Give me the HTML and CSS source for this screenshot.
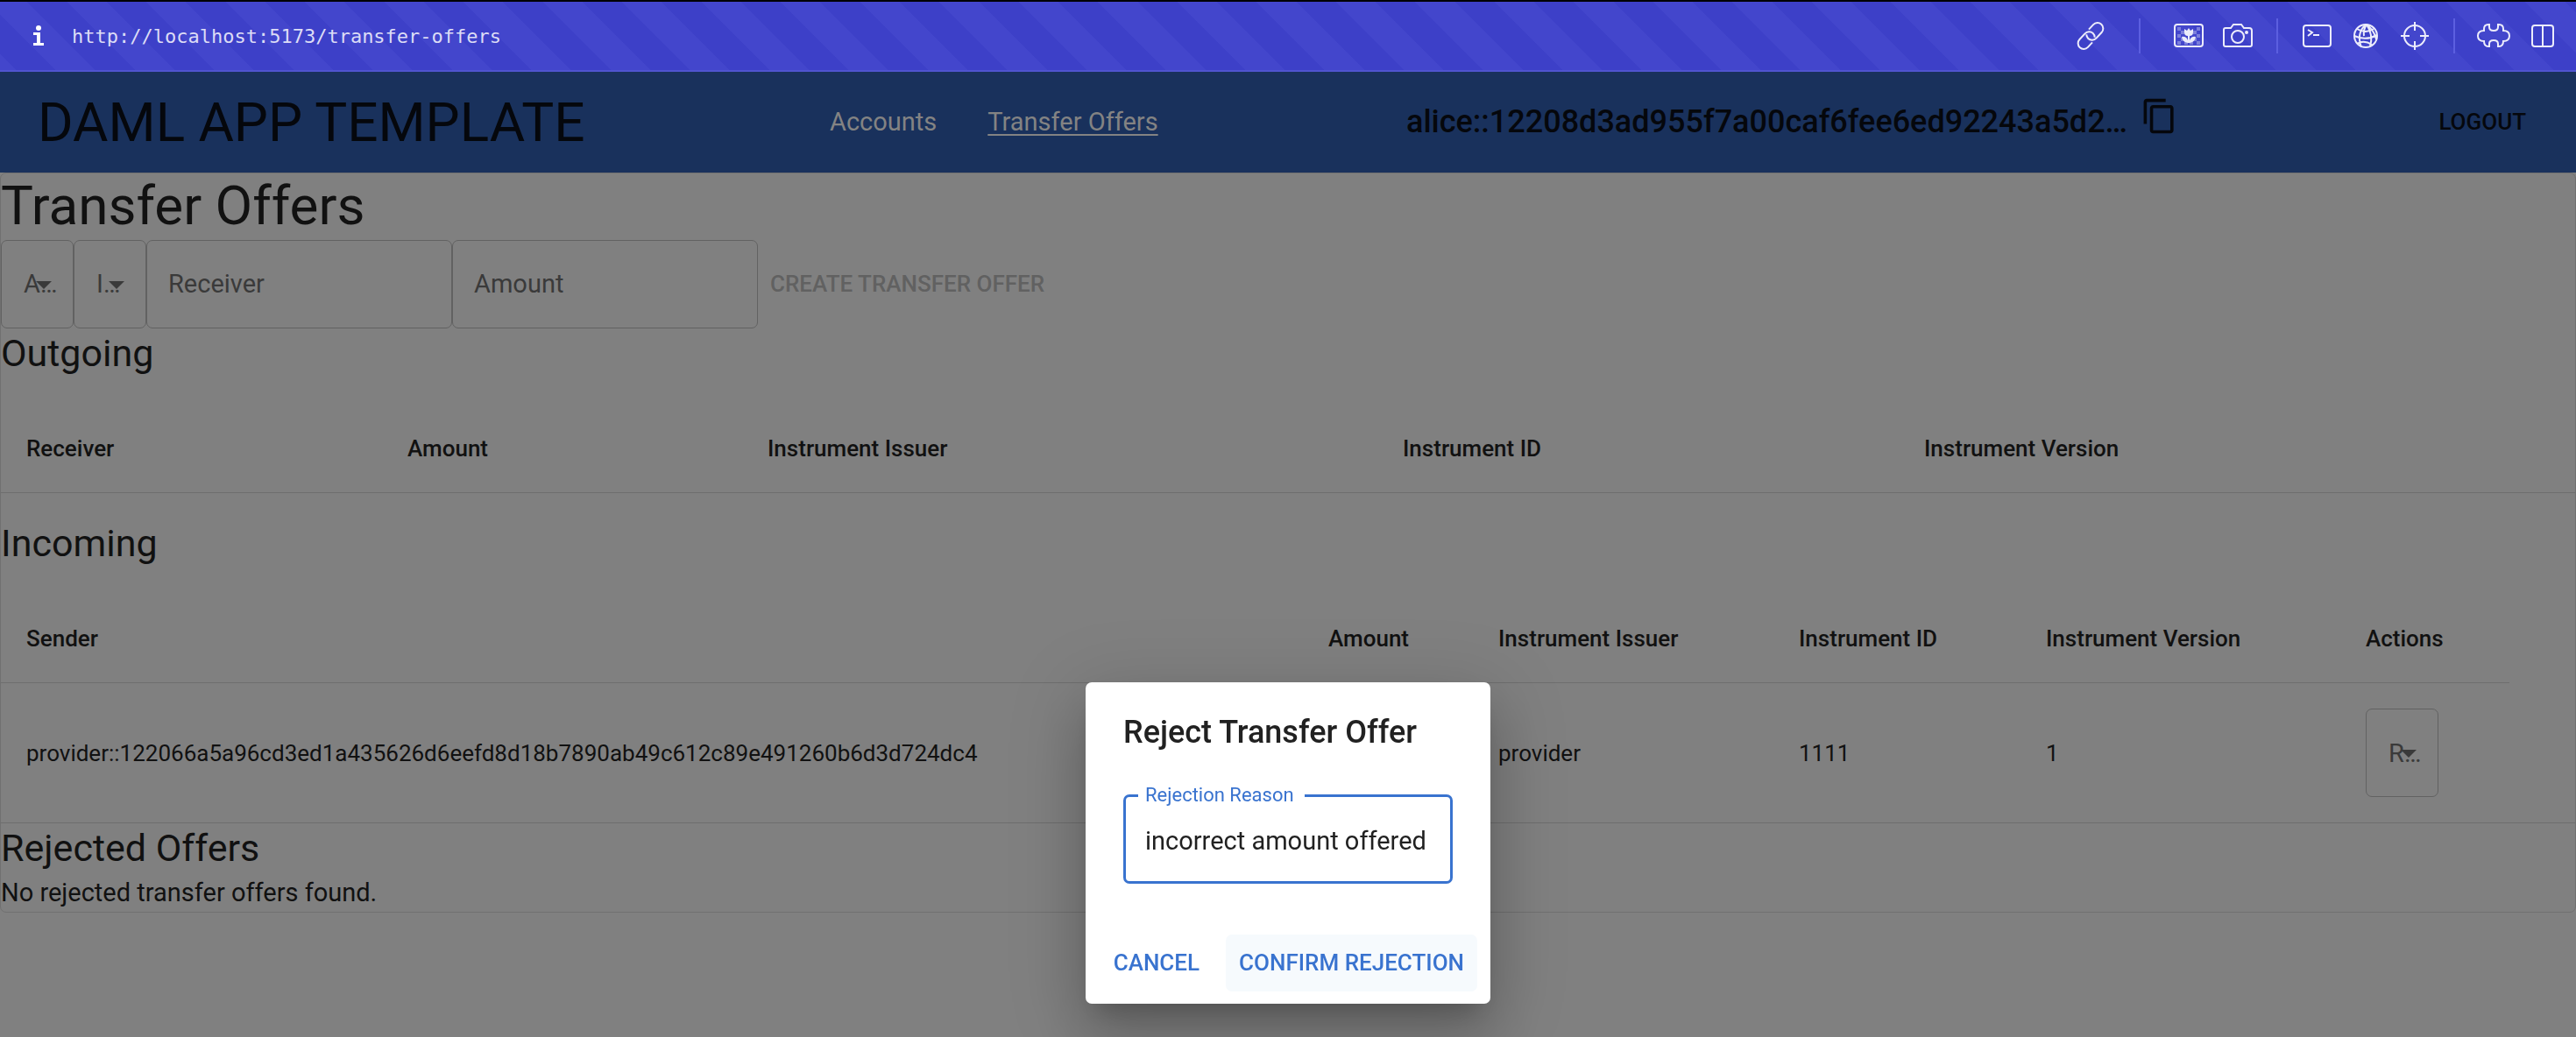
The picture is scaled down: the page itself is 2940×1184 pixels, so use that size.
FILE: index.html
```html
<!DOCTYPE html>
<html lang="en">
<head>
<meta charset="utf-8">
<title>Daml App Template</title>
<link rel="stylesheet" href="styles.css">
</head>
<body>
<div class="devbar">
  <span class="info">
    <svg width="14" height="24" viewBox="0 0 14 24" fill="#fff"><circle cx="7" cy="3" r="3"/><path d="M1 8h8v12h4v3H1v-3h4v-9H1z"/></svg>
  </span>
  <span class="url">http://localhost:5173/transfer-offers</span>
  <div class="tools">
    <button class="tool" aria-label="Copy link">
      <svg width="36" height="34" viewBox="-18 -17 36 34"><g transform="rotate(-47)"><path d="M-4 6.500H-11.500a6.500 6.500 0 0 1 0-13H-2.500a6.500 6.500 0 0 1 6.500 6.500a6.500 6.500 0 0 1-2 4.600"/><path d="M4-6.500H11.500a6.500 6.500 0 0 1 0 13H2.500a6.500 6.500 0 0 1-6.500-6.500a6.500 6.500 0 0 1 2-4.600"/></g></svg>
    </button>
    <span class="divider divider-wide"></span>
    <button class="tool" aria-label="Image">
      <svg width="36" height="34" viewBox="0 0 36 34"><path class="checks" d="M5 7h4v4H5zM9 11h4v4H9zM5 15h4v4H5zM9 19h4v4H9zM5 23h4v4H5zM13 23h4v4h-4zM27 7h4v4h-4zM23 11h4v4h-4zM27 15h4v4h-4zM23 19h4v4h-4zM27 23h4v4h-4zM19 23h4v4h-4z"/><rect x="2" y="4" width="32" height="25" rx="3"/><path class="solid" d="M13 9l3 2 2-3 2 3 3-2v4q0 4-4 4v5q2-5 7-4-1 6-7 7h-2q-6-1-7-7 5-1 7 4v-5q-4 0-4-4z"/></svg>
    </button>
    <button class="tool" aria-label="Screenshot">
      <svg width="36" height="34" viewBox="0 0 36 34"><path d="M4 8h6l3-4h9l3 4h6q3 0 3 3v16q0 2-2 2H4q-2 0-2-2V10q0-2 2-2z"/><circle cx="18" cy="18" r="7"/><circle class="solid" cx="28" cy="13" r="2"/></svg>
    </button>
    <span class="divider"></span>
    <button class="tool" aria-label="Console">
      <svg width="36" height="34" viewBox="0 0 36 34"><rect x="3" y="5" width="31" height="24" rx="3"/><path d="M8 10l5 3-5 4M14 16h7"/></svg>
    </button>
    <button class="tool" aria-label="Network">
      <svg width="34" height="34" viewBox="0 0 34 34"><circle cx="17" cy="17" r="13"/><path d="M17 4Q6 14 12 30M18 4Q26 16 22 29M18 4Q14 10 15 17M7 9q10 6 19 0M4 17q13 6 26-1M7 26q8-5 17 1M18 4q9 7 11 17"/></svg>
    </button>
    <button class="tool" aria-label="Inspect">
      <svg width="34" height="34" viewBox="0 0 34 34"><circle cx="17" cy="17" r="12"/><path d="M17 1v10M17 23v10M1 17h10M23 17h10"/></svg>
    </button>
    <span class="divider"></span>
    <button class="tool" aria-label="Extensions">
      <svg width="40" height="34" viewBox="0 0 40 34"><path d="M9 11V9q0-5 5-5h1v3q0 4 5 4t5-4V4h1q5 0 5 5v2q7 0 7 6t-7 6q0 6-5 6h-1v-3q0-4-5-4t-5 4v3h-1q-5 0-5-6-7 0-7-6t7-6z"/></svg>
    </button>
    <button class="tool" aria-label="Split view">
      <svg width="28" height="34" viewBox="0 0 28 34"><rect x="2" y="5" width="24" height="24" rx="3"/><path d="M14 5v24"/></svg>
    </button>
  </div>
</div>

<div class="app">
  <header class="appbar">
    <div class="brand">DAML APP TEMPLATE</div>
    <nav class="nav">
      <a href="#accounts">Accounts</a>
      <a href="#transfer-offers" class="current">Transfer Offers</a>
    </nav>
    <div class="party">
      <span>alice::12208d3ad955f7a00caf6fee6ed92243a5d2…</span>
      <button class="copy" aria-label="Copy party ID">
        <svg width="43" height="43" viewBox="0 0 24 24"><path d="M16 1H4c-1.100 0-2 .9-2 2v14h2V3h12V1zm3 4H8c-1.100 0-2 .9-2 2v14c0 1.100.9 2 2 2h11c1.100 0 2-.9 2-2V7c0-1.100-.9-2-2-2zm0 16H8V7h11v14z"/></svg>
      </button>
    </div>
    <button class="logout">LOGOUT</button>
  </header>

  <main class="paper">
    <h1>Transfer Offers</h1>
    <form class="offer-form">
      <div class="select"><select aria-label="Account"><option>Account</option></select><i class="arrow"></i></div>
      <div class="select"><select aria-label="Instrument"><option>Instrument</option></select><i class="arrow"></i></div>
      <input class="field" type="text" aria-label="Receiver" placeholder="Receiver">
      <input class="field" type="text" aria-label="Amount" placeholder="Amount">
      <button type="button" class="create" disabled>CREATE TRANSFER OFFER</button>
    </form>

    <h2>Outgoing</h2>
    <table class="outgoing">
      <colgroup><col class="o1"><col class="o2"><col class="o3"><col class="o4"><col></colgroup>
      <thead>
        <tr><th>Receiver</th><th>Amount</th><th>Instrument Issuer</th><th>Instrument ID</th><th>Instrument Version</th></tr>
      </thead>
    </table>

    <h2>Incoming</h2>
    <table class="incoming">
      <colgroup><col class="i1"><col class="i2"><col class="i3"><col class="i4"><col class="i5"><col class="i6"><col></colgroup>
      <thead>
        <tr><th>Sender</th><th>Amount</th><th>Instrument Issuer</th><th>Instrument ID</th><th>Instrument Version</th><th>Actions</th><td class="blank"></td></tr>
      </thead>
      <tbody>
        <tr>
          <td>provider::122066a5a96cd3ed1a435626d6eefd8d18b7890ab49c612c89e491260b6d3d724dc4</td>
          <td></td><td>provider</td><td>1111</td><td>1</td>
          <td><div class="select"><select aria-label="Respond"><option>Respond</option></select><i class="arrow"></i></div></td>
          <td></td>
        </tr>
      </tbody>
    </table>

    <h2>Rejected Offers</h2>
    <p>No rejected transfer offers found.</p>
  </main>
</div>

<div class="backdrop">
  <div class="dialog" role="dialog" aria-labelledby="dialog-title">
    <h2 class="dialog-title" id="dialog-title">Reject Transfer Offer</h2>
    <fieldset class="reason">
      <legend><label for="reason">Rejection Reason</label></legend>
      <input id="reason" type="text" value="incorrect amount offered">
    </fieldset>
    <div class="actions">
      <button class="action">CANCEL</button>
      <button class="action hover">CONFIRM REJECTION</button>
    </div>
  </div>
</div>
</body>
</html>
```
FILE: styles.css
```css
* { box-sizing: border-box; }
body {
  margin: 0;
  min-height: 100vh;
  display: flex;
  flex-direction: column;
  background: #808080;
  color: #111;
  font-family: Roboto, "Liberation Sans", sans-serif;
  font-size: 29px;
  line-height: 43px;
}
button, input, select { font: inherit; color: inherit; margin: 0; border: 0; background: none; padding: 0; }
h1, h2, p { margin: 0; font-weight: 400; }

/* Developer toolbar */
.devbar {
  height: 82px;
  display: flex;
  align-items: center;
  padding: 0 10px 0 37px;
  border-top: 2px solid #000;
  border-bottom: 2px solid #5054cf;
  background: repeating-linear-gradient(45deg, #4346cc 0 13px, #3d40c8 13px 45px, #4346cc 45px 64px);
}
.info { display: flex; width: 45px; }
.url { font-family: "DejaVu Sans Mono", monospace; font-size: 22px; color: #dcdcf6; }
.tools { display: flex; align-items: center; margin-left: auto; }
.tool { display: flex; justify-content: center; width: 56px; }
.tool svg { fill: none; stroke: #ececfb; stroke-width: 2; }
.tool .solid { fill: #ececfb; stroke: none; }
.tool .checks { fill: #7c7fdc; stroke: none; }
.divider { width: 2px; height: 40px; margin: 0 16px; background: #5c5fe0; }
.divider-wide { margin: 0 27px; }

/* Application bar */
.appbar {
  display: flex;
  align-items: center;
  height: 115px;
  padding: 0 43px;
  background: #19315c;
  color: #05070c;
}
.brand { font-size: 62px; line-height: 72px; width: 904px; }
.nav { display: flex; gap: 58px; width: 658px; color: #838383; }
.nav a { color: inherit; text-decoration: none; }
.nav .current { text-decoration: underline; text-decoration-thickness: 2px; text-underline-offset: 4px; }
.party { display: flex; align-items: center; gap: 15px; font-size: 36px; font-weight: 500; }
.copy { display: flex; padding-bottom: 14px; }
.copy svg { fill: currentColor; }
.logout { margin-left: auto; padding: 11px 14px; font-size: 26px; font-weight: 500; }

/* Content */
.paper { border: 1px solid #707070; border-radius: 7px; }
h1 { font-size: 62px; line-height: 74px; padding-bottom: 2px; }
h2 { font-size: 43px; line-height: 56px; padding-bottom: 2px; }
.offer-form { display: flex; color: #3a3a3a; }
.select {
  position: relative;
  display: flex;
  width: 83px;
  height: 101px;
  border: 1px solid #626262;
  border-radius: 7px;
  color: #3a3a3a;
  font-size: 29px;
}
.select select {
  appearance: none;
  width: 100%;
  padding: 0 18px 0 25px;
  overflow: hidden;
  text-overflow: ellipsis;
  white-space: nowrap;
}
.arrow {
  position: absolute;
  left: 39px;
  top: 46px;
  border: solid transparent;
  border-width: 9px 9px 0;
  border-top-color: #3a3a3a;
  pointer-events: none;
}
.field { width: 349px; height: 101px; padding: 0 24px 2px; border: 1px solid #626262; border-radius: 7px; }
.field::placeholder { color: #3a3a3a; opacity: 1; }
.create { padding: 0 14px; font-size: 26px; font-weight: 500; color: #616161; }

table { width: 100%; table-layout: fixed; border-collapse: collapse; margin: 29px 0; font-size: 26px; line-height: 42px; }
.incoming { margin-bottom: 0; }
th, td { padding: 29px 0 29px 29px; text-align: left; font-weight: 400; border-bottom: 1px solid #6e6e6e; }
th { font-weight: 500; }
.blank { border-bottom: 0; }
.o1 { width: 435px; } .o2 { width: 411px; } .o3 { width: 725px; } .o4 { width: 595px; }
.i1 { width: 1486px; } .i2 { width: 194px; } .i3 { width: 343px; } .i4 { width: 282px; } .i5 { width: 365px; } .i6 { width: 193px; }

/* Dialog */
.backdrop { position: fixed; inset: 82px 0 0; display: flex; flex-direction: column; align-items: center; justify-content: flex-end; padding-bottom: 38px; }
.dialog {
  width: 462px;
  padding: 28px 0 14px;
  border-radius: 7px;
  background: #fff;
  color: #212121;
  box-shadow: 0 20px 27px -13px rgba(0,0,0,.2), 0 43px 68px 5px rgba(0,0,0,.14), 0 16px 83px 14px rgba(0,0,0,.12);
}
.dialog-title { padding: 0 43px; font-size: 36px; line-height: 58px; font-weight: 500; }
.reason { margin: 32px 43px 58px; padding: 20px 22px 24px; border: 3px solid #3973cf; border-radius: 7px; }
.reason legend { padding: 0 12px 0 8px; margin-left: -8px; font-size: 22px; line-height: 22px; color: #3973cf; }
.reason input { display: block; width: 100%; outline: 0; }
.actions { display: flex; justify-content: flex-end; gap: 15px; padding: 0 15px; }
.action { padding: 11px 15px; font-size: 26px; font-weight: 500; white-space: nowrap; color: #3973cf; border-radius: 7px; }
.hover { background: #f6fafd; }
```
